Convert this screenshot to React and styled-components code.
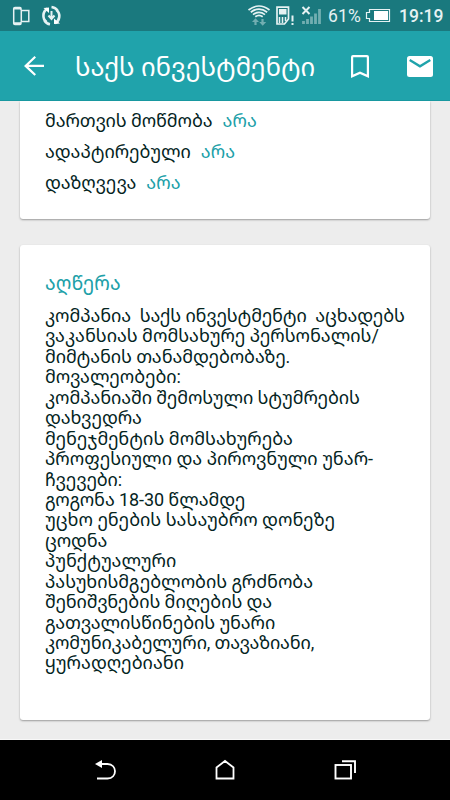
import React from 'react';
import styled, { createGlobalStyle } from 'styled-components';

const GlobalStyle = createGlobalStyle`
    * {
        box-sizing: border-box;
    }
    body {
        margin: 0;
        background: #ededed;
        font-family: Roboto, "Noto Sans Georgian", "Noto Sans", "DejaVu Sans", sans-serif;
    }
`;
const Screen = styled.div`
    width: 450px;
    height: 800px;
    display: flex;
    flex-direction: column;
    overflow: hidden;
    background: #ededed;
`;
const StatusBar = styled.header`
    flex: none;
    height: 31px;
    display: flex;
    background: #1a797e;
    color: #e6f2f3;
`;
const StatusIcons = styled.svg`
    display: block;
    flex: none;
`;
const StatusSpace = styled.div`
    flex: 1;
`;
const Percent = styled.div`
    width: 37px;
    font-size: 17.5px;
    line-height: 33px;
    letter-spacing: 0.2px;
    white-space: nowrap;
`;
const Clock = styled.div`
    width: 51px;
    font-size: 17.5px;
    font-weight: 500;
    line-height: 33px;
    white-space: nowrap;
`;
const Toolbar = styled.nav`
    flex: none;
    height: 70px;
    display: flex;
    align-items: center;
    padding: 0 15px 0 22px;
    background: #20a3ab;
    border-bottom: 1px solid #1898a0;
    color: #fff;
`;
const Title = styled.h1`
    flex: 1;
    margin: 2px 0 0 29px;
    font-size: 25.6px;
    font-weight: 400;
    line-height: 30px;
    white-space: nowrap;
`;
const ToolbarIcon = styled.svg`
    display: block;
    flex: none;
    margin-left: ${props => props.$gap || 0}px;
    fill: #fff;
`;
const Content = styled.main`
    flex: 1;
    min-height: 0;
    padding: 0 20px;
    overflow: hidden;
    border-bottom: 1px solid #f8f8f8;
`;
const Card = styled.section`
    height: ${props => props.$height}px;
    margin-bottom: 26px;
    padding: ${props => props.$top}px 0 0 25px;
    background: #fff;
    border-radius: ${props => (props.$cut ? '0 0 3px 3px' : '3px')};
    box-shadow: 0 1px 2px rgba(0, 0, 0, 0.35);
`;
const Field = styled.div`
    display: flex;
    gap: 10px;
    height: 31.2px;
    font-size: 18px;
    line-height: 30px;
    color: #04241e;
    white-space: nowrap;
    letter-spacing: ${props => props.$spacing}px;
`;
const FieldValue = styled.span`
    color: #20a0a8;
    letter-spacing: 0.1px;
`;
const CardTitle = styled.h2`
    margin: 0 0 9px;
    font-size: 19.5px;
    font-weight: 400;
    line-height: 24px;
    color: #20a0a8;
`;
const Line = styled.div`
    height: 20.45px;
    font-size: 18px;
    line-height: 21px;
    color: #04241e;
    white-space: pre;
    letter-spacing: ${props => props.$spacing}px;
`;
const NavBar = styled.footer`
    flex: none;
    height: 60px;
    display: flex;
    align-items: center;
    justify-content: space-between;
    padding: 0 92px 0 93px;
    background: #000;
`;

const fields = [
    {label: 'მართვის მოწმობა', value: 'არა', spacing: -0.12},
    {label: 'ადაპტირებული', value: 'არა', spacing: -0.06},
    {label: 'დაზღვევა', value: 'არა', spacing: -0.08}
];

const description = [
    {text: 'კომპანია  საქს ინვესტმენტი  აცხადებს', spacing: -0.12},
    {text: 'ვაკანსიას მომსახურე პერსონალის/', spacing: -0.03},
    {text: 'მიმტანის თანამდებობაზე.', spacing: -0.12},
    {text: 'მოვალეობები:', spacing: -0.06},
    {text: 'კომპანიაში შემოსული სტუმრების', spacing: -0.12},
    {text: 'დახვედრა', spacing: -0.12},
    {text: 'მენეჯმენტის მომსახურება', spacing: 0},
    {text: 'პროფესიული და პიროვნული უნარ-', spacing: 0},
    {text: 'ჩვევები:', spacing: -0.2},
    {text: 'გოგონა 18-30 წლამდე', spacing: -0.1},
    {text: 'უცხო ენების სასაუბრო დონეზე', spacing: 0},
    {text: 'ცოდნა', spacing: -0.15},
    {text: 'პუნქტუალური', spacing: -0.05},
    {text: 'პასუხისმგებლობის გრძნობა', spacing: -0.04},
    {text: 'შენიშვნების მიღების და', spacing: -0.09},
    {text: 'გათვალისწინების უნარი', spacing: -0.09},
    {text: 'კომუნიკაბელური, თავაზიანი,', spacing: -0.15},
    {text: 'ყურადღებიანი', spacing: 0}
];

const LeftStatus = () => (
    <StatusIcons width="70" height="31" fill="none" stroke="#e6f2f3">
        <path d="M21 10V8.500Q21 7.500 20 7.500H15Q13.700 7.500 13.700 8.500V23.500Q13.700 24.500 15 24.500H20Q21 24.500 21 23.500V22" strokeWidth="1.500" />
        <path d="M14 8.300H21M14 23.500H21" strokeWidth="2.400" />
        <rect x="21.300" y="10.500" width="7.500" height="11" strokeWidth="1.500" />
        <path d="M47.500 8.700A8 8 0 0 0 46.500 22M55 23.200A8 8 0 0 0 56.500 10" strokeWidth="2.600" />
        <path d="M43.500 8L49 7.500V13ZM60 23.500L54 24V18.500Z" fill="#fff" stroke="none" />
        <path d="M51.500 6.900Q55.500 7.400 57.500 10.500M44.500 20.500Q46.500 23.800 50 24.300" strokeWidth="2.500" />
        <path d="M51.500 11V19M48.500 15.500L51.500 19L54.500 15.500" strokeWidth="2" />
    </StatusIcons>
);

const SignalStatus = () => (
    <StatusIcons width="82" height="31" viewBox="246 0 82 31" fill="none" stroke="#e6f2f3">
        <path d="M248.500 10Q259 2 269.500 10M250.800 12.200Q259 6 267.200 12.200M253 14.600Q259 10 265 14.600M255.300 16.800Q259 14 262.700 16.800" strokeWidth="1.700" />
        <path d="M255.500 25V21M262.500 19V23" stroke="#72aeb1" strokeWidth="2.200" />
        <path d="M252 22L255.500 18.300L259 22ZM259.200 22L262.700 25.700L266.200 22Z" fill="#72aeb1" stroke="none" />
        <path d="M277 7.200H288.500V19L284.500 24H277Z" strokeWidth="1.700" />
        <rect x="279" y="9" width="7.500" height="5.500" fill="#e6f2f3" stroke="none" />
        <path d="M279.500 17V23M282.500 17V23M285.500 17V21" strokeWidth="1.500" />
        <path d="M292.500 15.500V21.500M292.500 23V25" strokeWidth="2" />
        <path d="M302.500 7L309.500 14M309.500 7L302.500 14" strokeWidth="2" />
        <path d="M303.500 21V24M307.500 19V24M311.500 16.500V24M315.500 13.500V24M319.500 9V24" stroke="#72aeb1" strokeWidth="2.800" />
    </StatusIcons>
);

const Battery = () => (
    <StatusIcons width="34" height="31" viewBox="365 0 34 31">
        <path d="M369.500 9.500H389.500V21.500H369.500V18.500H366.500V12.500H369.500Z" fill="none" stroke="#e6f2f3" strokeWidth="1.200" />
        <rect x="374" y="11" width="14" height="9" fill="#fff" />
    </StatusIcons>
);

const App = () => {
    return <Screen>
        <GlobalStyle />
        <StatusBar>
            <LeftStatus />
            <StatusSpace />
            <SignalStatus />
            <Percent>61%</Percent>
            <Battery />
            <Clock>19:19</Clock>
        </StatusBar>
        <Toolbar>
            <ToolbarIcon width="24" height="25" viewBox="22 53 24 25">
                <path d="M34.500 56L36 57.500L28.500 64.800H44V67H28.500L36 74.300L34.500 75.800L24 65.900Z" />
            </ToolbarIcon>
            <Title>საქს ინვესტმენტი</Title>
            <ToolbarIcon width="20" height="25" viewBox="351 53 20 25">
                <path fillRule="evenodd" d="M353 55H367Q369 55 369 57V78L360 74L351 78V57Q351 55 353 55ZM353.200 57.200V74.600L360 71.600L366.800 74.600V57.200Z" />
            </ToolbarIcon>
            <ToolbarIcon $gap={36} width="28" height="25" viewBox="407 53 28 25">
                <path d="M409.500 56H430.500Q433 56 433 58.500V74.500Q433 77 430.500 77H409.500Q407 77 407 74.500V58.500Q407 56 409.500 56Z" />
                <path d="M409.700 60L420 66.300L430.300 60" fill="none" stroke="#20a3ab" strokeWidth="2.300" />
            </ToolbarIcon>
        </Toolbar>
        <Content>
            <Card $cut $height={118} $top={5}>
                {fields.map(field => (
                    <Field key={field.label} $spacing={field.spacing}>
                        <span>{field.label}</span>
                        <FieldValue>{field.value}</FieldValue>
                    </Field>
                ))}
            </Card>
            <Card $height={475} $top={27}>
                <CardTitle>აღწერა</CardTitle>
                {description.map(line => (
                    <Line key={line.text} $spacing={line.spacing}>{line.text}</Line>
                ))}
            </Card>
        </Content>
        <NavBar>
            <svg width="26" height="24" viewBox="93 758 26 24" fill="none" stroke="#fff" strokeWidth="1.800">
                <path d="M97 778.500H107.500C117.500 778.500 117.500 764 107.500 764H100" />
                <path d="M95 764L102 760V768Z" fill="#fff" stroke="none" />
            </svg>
            <svg width="24" height="24" viewBox="214 758 24 24" fill="none" stroke="#fff" strokeWidth="1.800">
                <path d="M216.500 767.500L225 761L233.500 767.500V778.500H216.500Z" />
            </svg>
            <svg width="25" height="24" viewBox="333 758 25 24" fill="none" stroke="#fff" strokeWidth="1.900">
                <rect x="335.500" y="765" width="15.500" height="13.500" />
                <path d="M342 761.200H355V773" />
            </svg>
        </NavBar>
    </Screen>;
};

export default App;
